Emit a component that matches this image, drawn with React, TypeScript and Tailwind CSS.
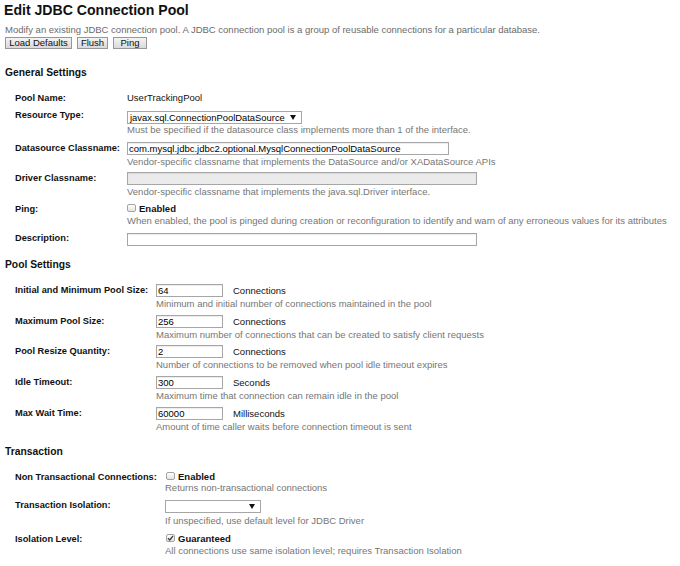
import React from "react";

const help = "leading-[12px] text-[#767676] whitespace-nowrap";

function Checkbox({ checked = false }: { checked?: boolean }) {
  return (
    <span className="mt-[1px] mr-[3px] flex h-[8px] w-[9px] shrink-0 items-center justify-center rounded-[2px] border border-[#a3a3a3] bg-gradient-to-b from-[#ffffff] to-[#e4e4e4]">
      {checked && (
        <svg width="7" height="6" viewBox="0 0 7 6">
          <path d="M1 3.2 L2.8 5 L6 1" fill="none" stroke="#444" strokeWidth="1.4" />
        </svg>
      )}
    </span>
  );
}

function TextBox({ value = "", width, disabled = false }: { value?: string; width: string; disabled?: boolean }) {
  return (
    <input
      readOnly
      disabled={disabled}
      defaultValue={value}
      className={`${width} h-[13px] border border-[#a6a6a6] px-[1px] text-[9.5px] leading-[11px] text-black shadow-[inset_0_1px_1px_rgba(0,0,0,0.08)] outline-none ${
        disabled ? "bg-[#ebebeb]" : "bg-white"
      }`}
    />
  );
}

function Select({ value = "", width }: { value?: string; width: string }) {
  return (
    <div className={`${width} flex h-[13px] items-center border border-[#a6a6a6] bg-white pl-[2px] pr-[5px] leading-[11px] text-black`}>
      <span className="flex-1 whitespace-nowrap text-[9.4px]">{value}</span>
      <svg width="6" height="5" viewBox="0 0 6 5" className="shrink-0">
        <path d="M0 0 H6 L3 5 Z" fill="#111" />
      </svg>
    </div>
  );
}

function Row({
  label,
  labelW,
  pb = "pb-[4px]",
  children,
}: {
  label: string;
  labelW: string;
  pb?: string;
  children: React.ReactNode;
}) {
  return (
    <div className={`flex ${pb}`}>
      <div className={`${labelW} shrink-0 pl-[10px] text-[9.25px] font-bold leading-[12px] text-[#111]`}>{label}</div>
      <div className="flex flex-col items-start">{children}</div>
    </div>
  );
}

function Heading({ title, mt }: { title: string; mt: string }) {
  return <h2 className={`${mt} text-[10.3px] font-bold leading-[13px] text-[#111]`}>{title}</h2>;
}

function Unit({ children }: { children: React.ReactNode }) {
  return <span className="ml-[10px] leading-[13px] text-[#111]">{children}</span>;
}

export default function App() {
  const g = "w-[122px]";
  const p = "w-[151px]";
  const t = "w-[160px]";
  return (
    <div className="min-h-[566px] bg-white pl-[5px] pt-[2px] font-['Liberation_Sans',Arial,sans-serif] text-[9.5px] text-[#111]">
      <h1 className="ml-[-1px] text-[14.1px] font-bold leading-[17px] text-[#111]">Edit JDBC Connection Pool</h1>
      <p className="mt-[5px] leading-[12px] text-[#6b6b6b]">
        Modify an existing JDBC connection pool. A JDBC connection pool is a group of reusable connections for a particular database.
      </p>
      <div className="mt-[1px] flex gap-[5px]">
        {[
          ["Load Defaults", "w-[67px]"],
          ["Flush", "w-[31px]"],
          ["Ping", "w-[34px]"],
        ].map(([label, w]) => (
          <button
            key={label}
            className={`${w} h-[12px] border border-[#979797] bg-gradient-to-b from-[#f4f4f4] to-[#d9d9d9] text-center leading-[10px] text-[#111]`}
          >
            {label}
          </button>
        ))}
      </div>

      <Heading title="General Settings" mt="mt-[16.5px]" />
      <div className="mt-[13px]">
        <Row label="Pool Name:" labelW={g} pb="pb-[5px]">
          <span className="leading-[12px]">UserTrackingPool</span>
        </Row>
        <Row label="Resource Type:" labelW={g} pb="pb-[5.5px]">
          <div className="mt-[2px]">
            <Select value="javax.sql.ConnectionPoolDataSource" width="w-[175px]" />
          </div>
          <div className={`${help} mt-[0.5px]`}>Must be specified if the datasource class implements more than 1 of the interface.</div>
        </Row>
        <Row label="Datasource Classname:" labelW={g} pb="pb-[4px]">
          <TextBox value="com.mysql.jdbc.jdbc2.optional.MysqlConnectionPoolDataSource" width="w-[322px]" />
          <div className={`${help} mt-[1px]`}>Vendor-specific classname that implements the DataSource and/or XADataSource APIs</div>
        </Row>
        <Row label="Driver Classname:" labelW={g} pb="pb-[5px]">
          <TextBox width="w-[350px]" disabled />
          <div className={`${help} mt-[1px]`}>Vendor-specific classname that implements the java.sql.Driver interface.</div>
        </Row>
        <Row label="Ping:" labelW={g} pb="pb-[5px]">
          <label className="flex font-bold leading-[12px]">
            <Checkbox />
            Enabled
          </label>
          <div className={help}>When enabled, the pool is pinged during creation or reconfiguration to identify and warn of any erroneous values for its attributes</div>
        </Row>
        <Row label="Description:" labelW={g} pb="pb-[0px]">
          <div className="mt-[1px]">
            <TextBox width="w-[350px]" />
          </div>
        </Row>
      </div>

      <Heading title="Pool Settings" mt="mt-[11px]" />
      <div className="mt-[13px]">
        {[
          ["Initial and Minimum Pool Size:", "64", "Connections", "Minimum and initial number of connections maintained in the pool"],
          ["Maximum Pool Size:", "256", "Connections", "Maximum number of connections that can be created to satisfy client requests"],
          ["Pool Resize Quantity:", "2", "Connections", "Number of connections to be removed when pool idle timeout expires"],
          ["Idle Timeout:", "300", "Seconds", "Maximum time that connection can remain idle in the pool"],
          ["Max Wait Time:", "60000", "Milliseconds", "Amount of time caller waits before connection timeout is sent"],
        ].map(([label, value, unit, text]) => (
          <Row key={label} label={label} labelW={p} pb="pb-[4.75px]">
            <div className="flex items-center">
              <TextBox value={value} width="w-[67px]" />
              <Unit>{unit}</Unit>
            </div>
            <div className={`${help} mt-[1px]`}>{text}</div>
          </Row>
        ))}
      </div>

      <Heading title="Transaction" mt="mt-[7.25px]" />
      <div className="mt-[13px]">
        <Row label="Non Transactional Connections:" labelW={t} pb="pb-[5.5px]">
          <label className="ml-[1px] flex font-bold leading-[12px]">
            <Checkbox />
            Enabled
          </label>
          <div className={`${help} mt-[-1px]`}>Returns non-transactional connections</div>
        </Row>
        <Row label="Transaction Isolation:" labelW={t} pb="pb-[6px]">
          <div className="mt-[1px]">
            <Select width="w-[96px]" />
          </div>
          <div className={`${help} mt-[1.5px]`}>If unspecified, use default level for JDBC Driver</div>
        </Row>
        <Row label="Isolation Level:" labelW={t} pb="pb-[4px]">
          <label className="ml-[1px] flex font-bold leading-[12px]">
            <Checkbox checked />
            Guaranteed
          </label>
          <div className={help}>All connections use same isolation level; requires Transaction Isolation</div>
        </Row>
      </div>
    </div>
  );
}
